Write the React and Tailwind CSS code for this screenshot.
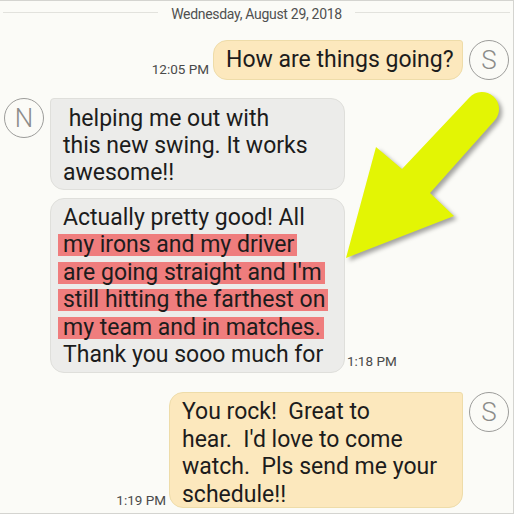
import React from 'react'

const font = { fontFamily: 'Roboto, "Noto Sans", sans-serif' }

const Avatar = ({ letter }) => (
    <div className="w-[40px] h-[40px] shrink-0 rounded-full border border-[#9c9c9a] flex items-center justify-center text-[26px] font-light text-[#8c8c8a] leading-none">
        {letter}
    </div>
)

const Time = ({ children, className = '' }) => (
    <div className={'text-[13.5px] text-[#4a4a4a] whitespace-nowrap leading-none ' + className}>{children}</div>
)

const Mark = ({ children }) => (
    <span className="inline-block bg-[#ef7d7d] leading-[22px] -ml-[5px] pl-[5px] pr-[3px]">{children}</span>
)

const Arrow = () => (
    <svg
        className="absolute left-0 top-0 pointer-events-none drop-shadow-[3px_3px_2px_rgba(0,0,0,0.35)]"
        width="514"
        height="514"
        viewBox="0 0 514 514"
    >
        <path
            d="M469.4 96.5 L402 168 L376 146 L346 257 L454 215 L430 192 L494.6 119.5 A17 17 0 0 0 469.4 96.5 Z"
            fill="#e3f504"
        />
    </svg>
)

export default function App() {
    return (
        <div className="w-[518px] h-[518px] bg-white" style={font}>
            <div className="relative w-[514px] h-[514px] bg-[#fbfbf7] border-t border-r border-b border-[#d4d4d0] text-[#1c1c1c]">
                {/* date divider */}
                <div className="h-[25px] flex items-center px-[3px]">
                    <div className="flex-1 h-px bg-[#e2e2dd] mt-[-3px]" />
                    <div className="mx-[13px] text-[14px] text-[#505050] tracking-[-0.3px] leading-none">
                        Wednesday, August 29, 2018
                    </div>
                    <div className="flex-1 h-px bg-[#e2e2dd] mt-[-3px]" />
                </div>

                {/* outgoing 1 */}
                <div className="mt-[14px] flex justify-end items-start pr-[4px]">
                    <div className="flex items-end">
                        <Time className="mr-[4px] mb-[4px]">12:05 PM</Time>
                        <div className="w-[250px] h-[40px] bg-[#fce8bd] border border-[#eedca9] rounded-[14px] rounded-tr-[3px] pl-[12px] pt-[5px] text-[23px] leading-[28px]">
                            How are things going?
                        </div>
                    </div>
                    <div className="ml-[6px]">
                        <Avatar letter="S" />
                    </div>
                </div>

                {/* incoming */}
                <div className="mt-[18px] flex items-start pl-[4px]">
                    <Avatar letter="N" />
                    <div className="ml-[6px] flex flex-col">
                        <div className="w-[295px] bg-[#ececea] border border-[#dfdfdb] rounded-[14px] rounded-tl-[4px] pl-[12px] pt-[6px] pb-[3px] text-[23px] leading-[27px] whitespace-pre">
                            <div> helping me out with</div>
                            <div>this new swing. It works</div>
                            <div>awesome!!</div>
                        </div>
                        <div className="mt-[8px] flex items-end">
                            <div className="w-[295px] bg-[#ececea] border border-[#dfdfdb] rounded-[14px] pl-[12px] pt-[5px] pb-[4px] text-[23px] leading-[27.4px] whitespace-pre">
                                <div>Actually pretty good! All</div>
                                <div><Mark>my irons and my driver</Mark></div>
                                <div><Mark>are going straight and I'm</Mark></div>
                                <div><Mark>still hitting the farthest on</Mark></div>
                                <div><Mark>my team and in matches.</Mark></div>
                                <div>Thank you sooo much for</div>
                            </div>
                            <Time className="ml-[2px] mb-[5px]">1:18 PM</Time>
                        </div>
                    </div>
                </div>

                {/* outgoing 2 */}
                <div className="mt-[19px] flex justify-end items-start pr-[4px]">
                    <div className="flex items-end">
                        <Time className="mr-[3px] mb-[1px]">1:19 PM</Time>
                        <div className="w-[294px] h-[116px] bg-[#fce8bd] border border-[#eedca9] rounded-[14px] rounded-tr-[3px] pl-[12px] pt-[5px] text-[23px] leading-[27.5px] whitespace-pre">
                            <div>You rock!  Great to</div>
                            <div>hear.  I'd love to come</div>
                            <div>watch.  Pls send me your</div>
                            <div>schedule!!</div>
                        </div>
                    </div>
                    <div className="ml-[6px]">
                        <Avatar letter="S" />
                    </div>
                </div>

                <Arrow />
            </div>
        </div>
    )
}
